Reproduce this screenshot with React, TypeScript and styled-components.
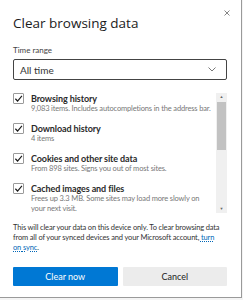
import styled, { createGlobalStyle } from 'styled-components';

const GlobalStyle = createGlobalStyle`
  html, body {
    margin: 0;
    padding: 0;
    background: #f4f4f4;
  }
  body {
    font-family: Lato, 'Open Sans', sans-serif;
    color: #1b1b1b;
  }
`;

interface Option {
  id: number;
  title: string;
  detail: string;
}

const OPTIONS: Option[] = [
  { id: 1, title: 'Browsing history', detail: '9,083 items. Includes autocompletions in the address bar.' },
  { id: 2, title: 'Download history', detail: '4 items' },
  { id: 3, title: 'Cookies and other site data', detail: 'From 898 sites. Signs you out of most sites.' },
  { id: 4, title: 'Cached images and files', detail: 'Frees up 3.3 MB. Some sites may load more slowly on your next visit.' },
];

const Check = () => (
  <svg width="9" height="9" viewBox="0 0 10 10">
    <path d="M1.5 5.3 L4 7.8 L8.8 2.2" fill="none" stroke="#1b1b1b" strokeWidth="1.3" />
  </svg>
);

const App = () => {
  return (
    <>
      <GlobalStyle />
      <Dialog>
        <Header>
          <Title>Clear browsing data</Title>
          <Close aria-label="Close">
            <svg width="6" height="6" viewBox="0 0 6 6">
              <path d="M0.5 0.5 L5.5 5.5 M5.5 0.5 L0.5 5.5" stroke="#777" strokeWidth="0.9" />
            </svg>
          </Close>
        </Header>
        <Label>Time range</Label>
        <Select>
          <span>All time</span>
          <svg width="8" height="5" viewBox="0 0 8 5">
            <path d="M0.5 0.5 L4 4 L7.5 0.5" fill="none" stroke="#555" strokeWidth="0.8" />
          </svg>
        </Select>
        <ListArea>
          <Items>
            {OPTIONS.map((option) => (
              <Row key={option.id}>
                <Box>
                  <Check />
                </Box>
                <RowText>
                  <RowTitle>{option.title}</RowTitle>
                  <RowDetail>{option.detail}</RowDetail>
                </RowText>
              </Row>
            ))}
          </Items>
          <Scrollbar>
            <Arrow>▲</Arrow>
            <Track>
              <Thumb />
            </Track>
            <Arrow>▼</Arrow>
          </Scrollbar>
        </ListArea>
        <Note>
          This will clear your data on this device only. To clear browsing data from all of your
          synced devices and your Microsoft account, <SyncLink href="#">turn on{'\u00a0'}sync</SyncLink>.
        </Note>
        <Buttons>
          <Button primary>Clear now</Button>
          <Button>Cancel</Button>
        </Buttons>
      </Dialog>
    </>
  );
};

export default App;

const Dialog = styled.div`
  width: 242px;
  height: 298px;
  box-sizing: border-box;
  background: #fff;
  border-right: 1px solid #9a9a9a;
  border-bottom: 1px solid #9a9a9a;
  padding: 8px 14px 0 13px;
  display: flex;
  flex-direction: column;
`;

const Header = styled.div`
  flex: none;
  display: flex;
  justify-content: space-between;
  align-items: flex-start;
`;

const Title = styled.h1`
  margin: 7px 0 0;
  font-family: 'Open Sans', sans-serif;
  font-size: 13.5px;
  line-height: 16px;
  font-weight: 400;
  color: #1b1b1b;
`;

const Close = styled.button`
  margin: 1px -4px 0 0;
  padding: 0;
  border: none;
  background: transparent;
  width: 8px;
  height: 8px;
  display: flex;
  align-items: center;
  justify-content: center;
`;

const Label = styled.div`
  flex: none;
  margin-top: 14px;
  font-size: 8px;
  line-height: 10px;
  color: #444;
`;

const Select = styled.div`
  flex: none;
  margin-top: 4px;
  height: 21px;
  box-sizing: border-box;
  border: 1px solid #444;
  border-radius: 2px;
  display: flex;
  align-items: center;
  justify-content: space-between;
  padding: 0 10px 0 6px;
  font-size: 10px;
  color: #333;
`;

const ListArea = styled.div`
  flex: none;
  margin-top: 9px;
  height: 124px;
  display: flex;
  gap: 2px;
`;

const Items = styled.div`
  flex: 1;
  overflow: hidden;
  padding-top: 4px;
  display: flex;
  flex-direction: column;
  gap: 9px;
`;

const Row = styled.div`
  display: flex;
  gap: 7px;
`;

const Box = styled.div`
  flex: none;
  width: 11px;
  height: 11px;
  box-sizing: border-box;
  border: 1px solid #9a9a9a;
  border-radius: 1px;
  display: flex;
  align-items: center;
  justify-content: center;
`;

const RowText = styled.div`
  display: flex;
  flex-direction: column;
`;

const RowTitle = styled.div`
  font-size: 9px;
  line-height: 11px;
  font-weight: 700;
  letter-spacing: -0.1px;
  color: #2a2a2a;
`;

const RowDetail = styled.div`
  font-size: 7.5px;
  line-height: 10px;
  letter-spacing: -0.15px;
  color: #777;
`;

const Scrollbar = styled.div`
  flex: none;
  width: 11px;
  margin-top: 4px;
  background: #f0f0f0;
  display: flex;
  flex-direction: column;
  align-items: center;
`;

const Arrow = styled.div`
  font-size: 4px;
  line-height: 8px;
  color: #666;
`;

const Track = styled.div`
  flex: 1;
  width: 100%;
`;

const Thumb = styled.div`
  height: 48px;
  background: #c2c2c2;
  margin: 1px 1px 0;
`;

const Note = styled.p`
  flex: none;
  margin: 10px 0 0;
  font-size: 7.5px;
  line-height: 10px;
  letter-spacing: -0.15px;
  color: #333;
`;

const SyncLink = styled.a`
  color: #0067b8;
  text-decoration: underline dotted;
`;

const Buttons = styled.div`
  flex: none;
  margin-top: 14px;
  display: grid;
  grid-template-columns: 1fr 1fr;
  gap: 5px;
`;

const Button = styled.button<{ primary?: boolean }>`
  height: 19px;
  border: none;
  border-radius: 1px;
  font-family: inherit;
  font-size: 9px;
  background: ${(p) => (p.primary ? '#0078d4' : '#ececec')};
  color: ${(p) => (p.primary ? '#fff' : '#222')};
`;
